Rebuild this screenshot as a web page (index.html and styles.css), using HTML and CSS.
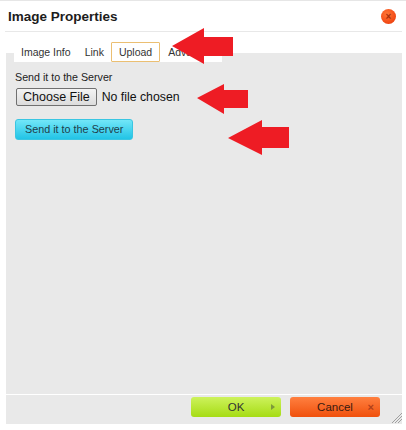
FILE: index.html
```html
<!DOCTYPE html>
<html>
<head>
<meta charset="utf-8">
<link rel="stylesheet" href="styles.css">
</head>
<body>
<div class="dialog">
  <div class="titlebar">
    <span class="title">Image Properties</span>
    <span class="close"><span class="close-x">×</span></span>
  </div>
  <div class="tabs">
    <span class="tab">Image Info</span>
    <span class="tab">Link</span>
    <span class="tab active">Upload</span>
    <span class="tab">Advanced</span>
  </div>
  <div class="body">
    <div class="label">Send it to the Server</div>
    <div class="file-row">
      <span class="file-btn">Choose File</span>
      <span class="file-name">No file chosen</span>
    </div>
    <div class="send-row"><span class="send-btn">Send it to the Server</span></div>
  </div>
  <div class="footer">
    <span class="btn ok">OK<span class="ok-arrow"></span></span>
    <span class="btn cancel">Cancel<span class="cancel-x">×</span></span>
  </div>
  <svg class="grip" width="12" height="14" viewBox="0 0 12 14">
    <line x1="1" y1="13" x2="11" y2="3" stroke="#a0a0a0" stroke-width="1"/>
    <line x1="4" y1="13" x2="11" y2="6" stroke="#a0a0a0" stroke-width="1"/>
    <line x1="7" y1="13" x2="11" y2="9" stroke="#a0a0a0" stroke-width="1"/>
  </svg>
  <svg class="arrows" width="406" height="430" viewBox="0 0 406 430">
    <polygon fill="#ee1c24" points="172,45 204,27 204,36 233,36 233,55 204,55 204,63"/>
    <polygon fill="#ee1c24" points="197,97 224,83 224,89 248,89 248,107 224,107 224,113"/>
    <polygon fill="#ee1c24" points="228,137 262,119 262,126 289,126 289,147 262,147 262,154"/>
  </svg>
</div>
</body>
</html>
```

FILE: styles.css
```css
html, body {
  margin: 0;
  padding: 0;
  background: #ffffff;
}

.dialog {
  position: relative;
  width: 406px;
  height: 424px;
  box-sizing: border-box;
  border-top: 1px solid #e6e6e6;
  display: flex;
  flex-direction: column;
  font-family: "Liberation Sans", Arial, sans-serif;
  color: #222;
}

.titlebar {
  height: 30px;
  margin: 0 4px 0 5px;
  padding: 0 6px 0 3px;
  border-bottom: 1px solid #e8e8e8;
  display: flex;
  align-items: center;
  justify-content: space-between;
}

.title {
  font-size: 13.5px;
  font-weight: bold;
  color: #1c1c1c;
  margin-top: 1px;
}

.close {
  width: 15px;
  height: 15px;
  border-radius: 50%;
  background: radial-gradient(circle at 40% 35%, #ff7a3a 0%, #f5501a 55%, #e0380a 100%);
  display: flex;
  align-items: center;
  justify-content: center;
  margin-top: 1px;
}

.close-x {
  font-size: 10px;
  line-height: 10px;
  color: #a8300c;
  font-weight: bold;
}

.tabs {
  position: relative;
  z-index: 1;
  align-self: flex-start;
  margin: 10px 0 -9px 14px;
  height: 20px;
  background: #ffffff;
  display: flex;
  align-items: stretch;
}

.tab {
  display: flex;
  align-items: center;
  padding: 0 7px;
  font-size: 10.5px;
  color: #333;
}

.tab.active {
  border: 1px solid #ebbf72;
  border-radius: 1px;
  padding: 0 7px;
  margin: 0 1px 0 0;
}

.body {
  flex: 1;
  margin: 0 4px 0 6px;
  background: #e9e9e9;
  padding: 18px 9px 0 9px;
}

.label {
  font-size: 10.7px;
  line-height: 13px;
  color: #222;
}

.file-row {
  display: flex;
  align-items: center;
  margin-top: 4px;
  margin-left: 1px;
}

.file-btn {
  box-sizing: border-box;
  height: 18px;
  padding: 0 6px;
  border: 1px solid #707070;
  border-radius: 2px;
  background: linear-gradient(#f4f4f4, #dcdcdc);
  font-size: 12.5px;
  line-height: 16px;
  color: #111;
}

.file-name {
  font-size: 12.3px;
  color: #111;
  margin-left: 5px;
}

.send-row {
  margin-top: 13px;
  display: flex;
}

.send-btn {
  box-sizing: border-box;
  height: 21px;
  padding: 0 9px;
  border-radius: 3px;
  background: linear-gradient(#72e6f8, #22c4e6);
  border: 1px solid #3ac6e2;
  font-size: 10.8px;
  line-height: 19px;
  color: #1f3d4a;
}

.footer {
  height: 27px;
  margin: 0 4px 0 6px;
  border-top: 1px solid #ffffff;
  background: #e9e9e9;
  display: flex;
  justify-content: flex-end;
  align-items: flex-start;
  padding: 2px 22px 0 0;
  gap: 9px;
}

.btn {
  position: relative;
  width: 90px;
  height: 20px;
  border-radius: 3px;
  font-size: 11.5px;
  line-height: 20px;
  text-align: center;
  color: #333;
}

.ok {
  background: linear-gradient(#cdf25c, #a6dc14);
}

.cancel {
  background: linear-gradient(#ff8040, #f0500c);
  color: #3a1a10;
}

.ok-arrow {
  position: absolute;
  right: 6px;
  top: 7px;
  width: 0;
  height: 0;
  border-left: 4px solid #7d9a3a;
  border-top: 3px solid transparent;
  border-bottom: 3px solid transparent;
}

.cancel-x {
  position: absolute;
  right: 6px;
  top: 0;
  font-size: 11px;
  font-weight: bold;
  color: #b0401a;
}

.grip {
  position: absolute;
  right: 3px;
  bottom: 0;
}

.arrows {
  position: absolute;
  left: 0;
  top: 0;
  pointer-events: none;
  z-index: 5;
}
```
